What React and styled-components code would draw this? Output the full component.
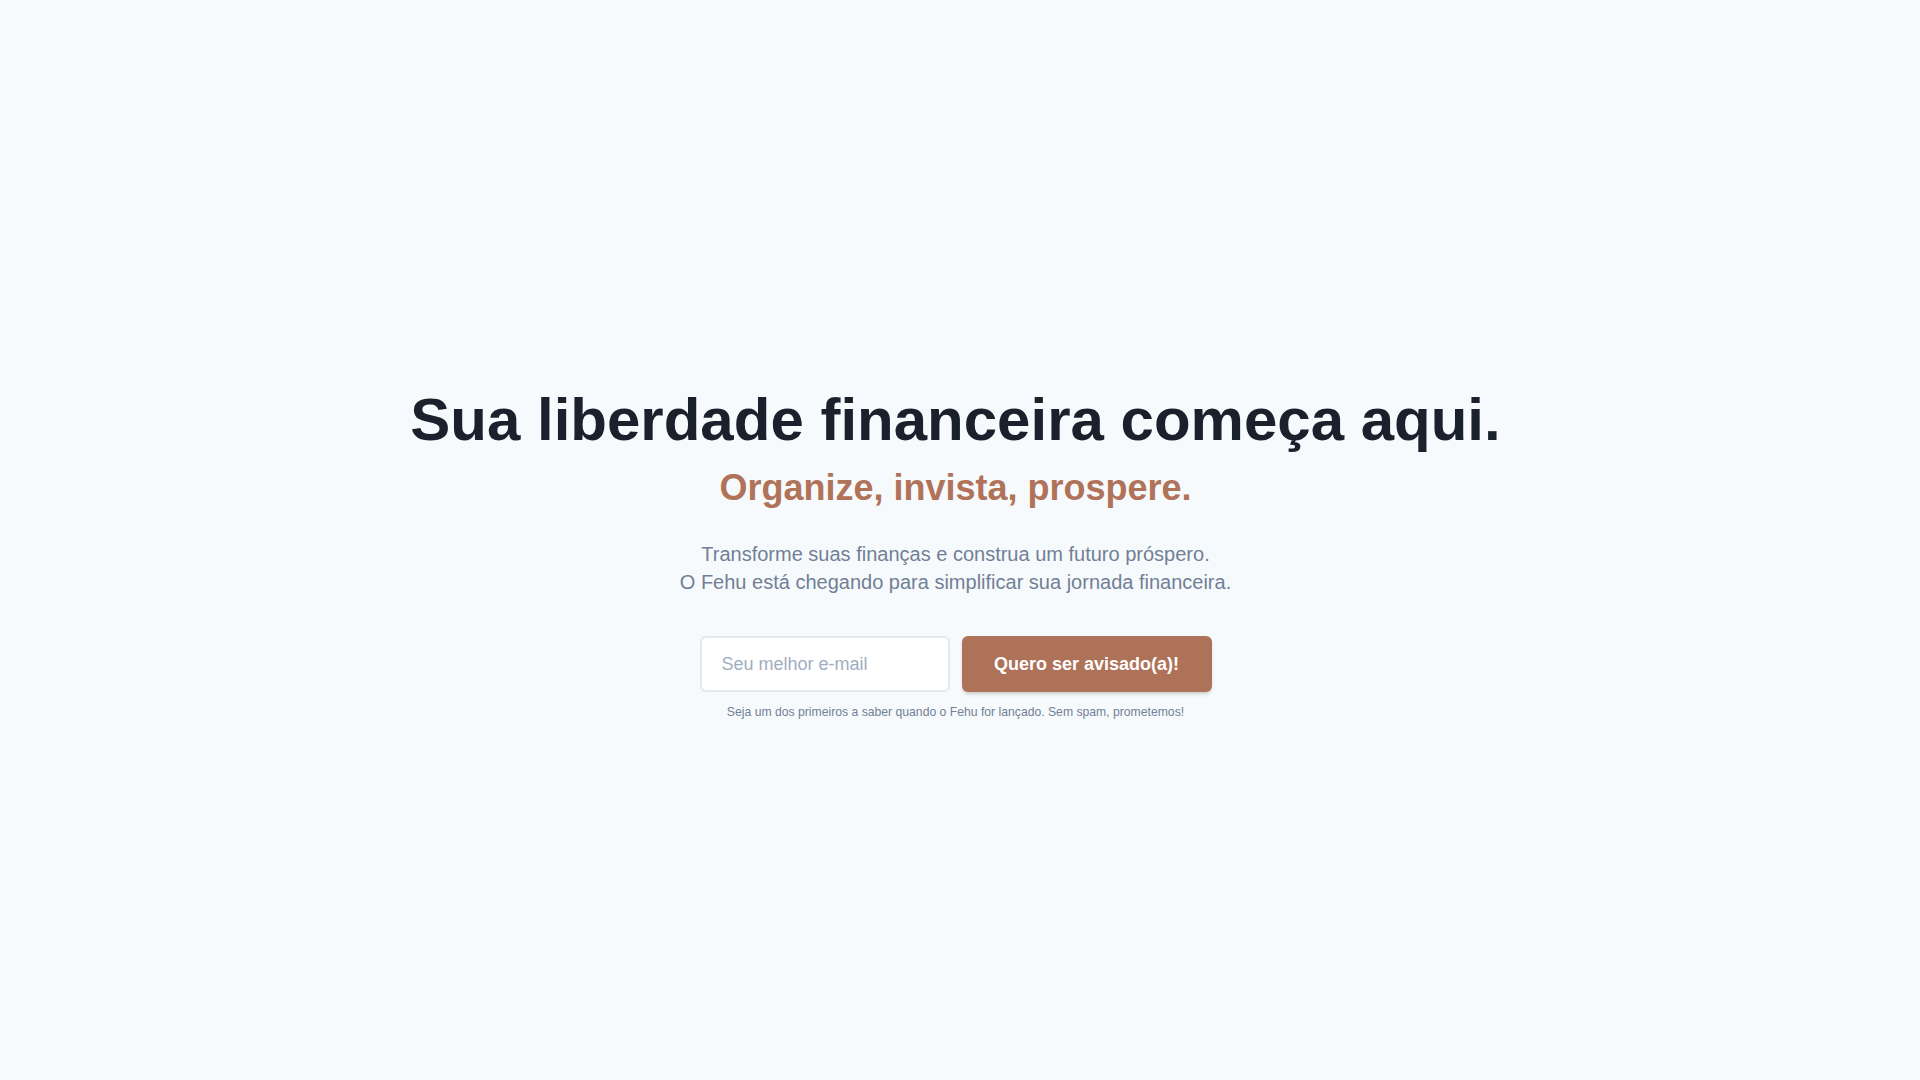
import React from 'react';
import styled, { createGlobalStyle } from 'styled-components';

const GlobalStyle = createGlobalStyle`
	html, body {
		margin: 0;
		padding: 0;
		background: #f7fafc;
	}

	body {
		font-family: 'Liberation Sans', Arial, sans-serif;
		-webkit-font-smoothing: antialiased;
	}

	::-webkit-scrollbar {
		width: 9px;
	}

	::-webkit-scrollbar-track {
		background: #ffffff;
	}

	::-webkit-scrollbar-thumb {
		background: #141414;
		border-radius: 4px;
		border-left: 2px solid transparent;
		background-clip: padding-box;
	}
`;

// the reference keeps a 9px scrollbar gutter on the right
const Page = styled.div`
	min-height: 229vh;
	padding-right: 9px;
	background: #f7fafc;
`;

const Hero = styled.section`
	display: flex;
	flex-direction: column;
	align-items: center;
	text-align: center;
	padding: 390px 24px 0;
`;

const Title = styled.h1`
	margin: 0 0 18px;
	font-size: 60px;
	line-height: 1;
	font-weight: 700;
	color: #1a202c;
`;

const Tagline = styled.h2`
	margin: 0 0 32px;
	font-size: 36px;
	line-height: 40px;
	font-weight: 700;
	color: #b07359;
`;

const Lead = styled.p`
	margin: 0 0 40px;
	font-size: 20px;
	line-height: 28px;
	color: #718096;
`;

const SignupForm = styled.form`
	display: grid;
	grid-template-columns: 1fr 1fr;
	gap: 12px;
	width: 100%;
	max-width: 512px;
`;

const EmailInput = styled.input`
	width: 100%;
	min-width: 0;
	box-sizing: border-box;
	height: 56px;
	padding: 0 20px;
	border: 2px solid #e2e8f0;
	border-radius: 6px;
	background: #fff;
	font-family: inherit;
	font-size: 18px;
	color: #1a202c;
	outline: none;

	&::placeholder {
		color: #a0aec0;
	}
`;

const SubmitButton = styled.button`
	width: 100%;
	height: 56px;
	padding: 0 16px;
	border: none;
	border-radius: 6px;
	background: #ae7259;
	color: #fff;
	font-family: inherit;
	font-size: 18px;
	font-weight: 700;
	cursor: pointer;
	box-shadow: 0 3px 4px -1px rgba(0, 0, 0, 0.14), 0 2px 3px -1px rgba(0, 0, 0, 0.08);
`;

const Note = styled.p`
	margin: 12px 0 0;
	font-size: 12.2px;
	line-height: 16px;
	color: #718096;
`;

const App = () => {
	return (
		<Page>
			<GlobalStyle />
			<Hero>
				<Title>Sua liberdade financeira começa aqui.</Title>
				<Tagline>Organize, invista, prospere.</Tagline>
				<Lead>
					Transforme suas finanças e construa um futuro próspero.
					<br />
					O Fehu está chegando para simplificar sua jornada financeira.
				</Lead>
				<SignupForm onSubmit={e => e.preventDefault()}>
					<EmailInput type="email" placeholder="Seu melhor e-mail" />
					<SubmitButton type="submit">Quero ser avisado(a)!</SubmitButton>
				</SignupForm>
				<Note>Seja um dos primeiros a saber quando o Fehu for lançado. Sem spam, prometemos!</Note>
			</Hero>
		</Page>
	);
};

export default App;
